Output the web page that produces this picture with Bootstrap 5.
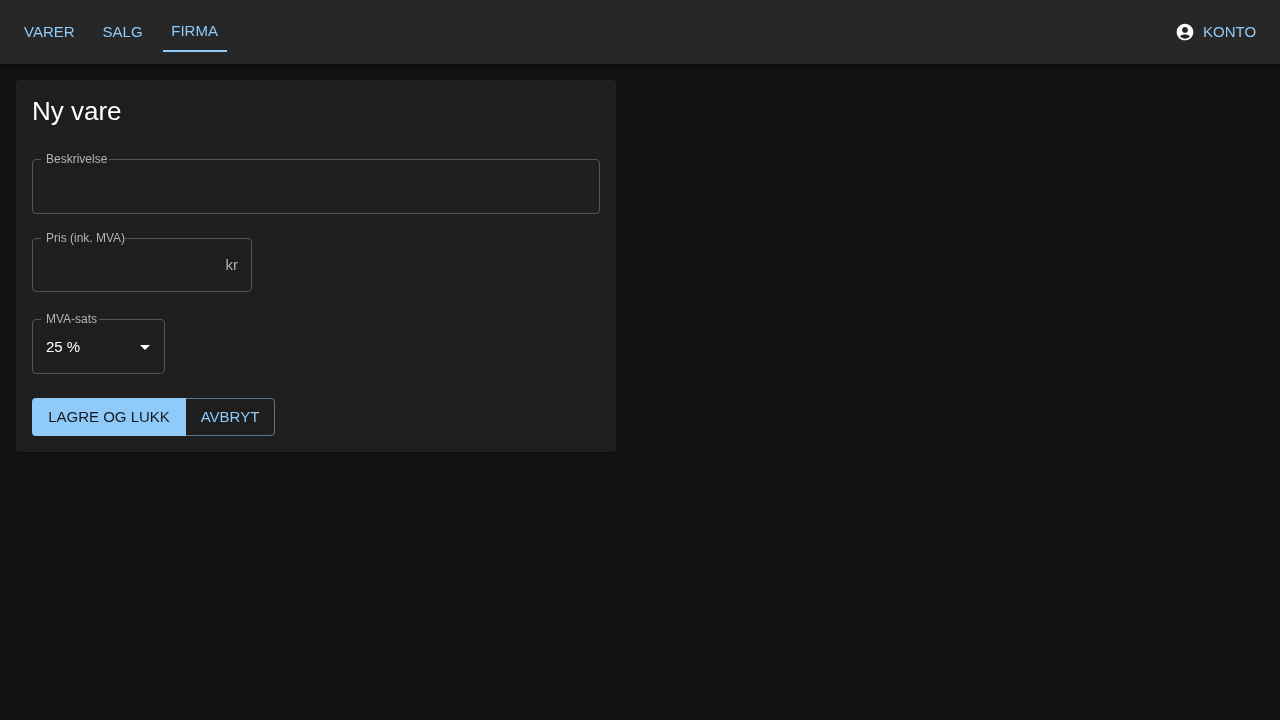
<!DOCTYPE html>
<html lang="no">
<head>
<meta charset="utf-8">
<title>Ny vare</title>
<link href="https://cdn.jsdelivr.net/npm/bootstrap@5.3.0/dist/css/bootstrap.min.css" rel="stylesheet">
<style>
html,body{height:100%}
body{background:#121212;color:#fff;font-family:"Liberation Sans",Arial,sans-serif;font-size:16px;-webkit-font-smoothing:antialiased}
.topbar{height:64px;background:#272727;padding:0 24px;box-shadow:0 2px 4px -1px rgba(0,0,0,.2),0 4px 5px rgba(0,0,0,.14),0 1px 10px rgba(0,0,0,.12)}
.tab-link{color:#90caf9;font-size:15px;line-height:26px;text-decoration:none;text-transform:uppercase}
.tabs-row{gap:28px;will-change:transform}
.acct-link{will-change:transform}
.tab-active{display:block;width:64px;text-align:center;padding:7px 0 0;margin:0 -8px;border-bottom:2px solid #90caf9;height:40px;line-height:24px}
.acct-icon{width:20px;height:20px;fill:#fff}
.sheet{width:600px;margin:16px 0 0 16px;background:#1e1e1e;border-radius:4px;padding:16px;will-change:transform;box-shadow:0 2px 1px -1px rgba(0,0,0,.2),0 1px 1px rgba(0,0,0,.14),0 1px 3px rgba(0,0,0,.12)}
.sheet-title{font-size:26px;line-height:30px;font-weight:400;margin:0 0 33px}
.outfield{position:relative;border:1px solid #555;border-radius:4px;height:55px;color:#fff}
.outfield-label{position:absolute;top:-8px;left:8px;padding:0 2px 0 5px;background:#1e1e1e;color:#b3b3b3;font-size:12px;line-height:14px}
.label-tight{padding-right:0}
.w-desc{width:568px;margin-bottom:24px}
.w-price{width:220px;height:54px;margin-bottom:27px;padding:0 13px}
.unit{color:#b3b3b3;font-size:15px}
.w-vat{width:133px;margin-bottom:24px;padding:2px 13px 0}
.vat-value{font-size:15px}
.caret-down{width:0;height:0;border-left:5px solid transparent;border-right:5px solid transparent;border-top:5px solid #fff;margin-right:1px}
.act-btn{height:38px;font-size:15px;line-height:24px;border-radius:4px;padding:0;display:flex;align-items:center;justify-content:center;text-transform:uppercase;border:1px solid transparent}
.act-primary{position:relative;z-index:1;width:154px;background:#90caf9;color:rgba(0,0,0,.87);border-top-right-radius:0;border-bottom-right-radius:0}
.act-primary:hover,.act-primary:active{background:#90caf9!important;color:rgba(0,0,0,.87)!important;border-color:transparent!important}
.act-second{width:90px;margin-left:-1px;background:transparent;color:#90caf9;border-color:#57748c;border-top-left-radius:0;border-bottom-left-radius:0}
.act-second:hover{color:#90caf9;border-color:#57748c}
</style>
</head>
<body>
<nav class="topbar d-flex align-items-center justify-content-between">
  <div class="d-flex align-items-center tabs-row">
    <a class="tab-link" href="#">Varer</a>
    <a class="tab-link" href="#">Salg</a>
    <a class="tab-link tab-active" href="#">Firma</a>
  </div>
  <a class="tab-link acct-link d-flex align-items-center gap-2" href="#">
    <svg class="acct-icon" viewBox="0 0 24 24" aria-hidden="true"><path d="M12 2C6.48 2 2 6.48 2 12s4.48 10 10 10 10-4.48 10-10S17.52 2 12 2zm0 4c1.93 0 3.5 1.57 3.5 3.5S13.93 13 12 13s-3.5-1.57-3.5-3.5S10.07 6 12 6zm0 14c-2.03 0-4.43-.82-6.14-2.88C7.55 15.8 9.68 15 12 15s4.45.8 6.14 2.12C16.43 19.18 14.03 20 12 20z"/></svg>
    <span>Konto</span>
  </a>
</nav>
<main class="sheet">
  <h1 class="sheet-title">Ny vare</h1>
  <div class="outfield w-desc"><span class="outfield-label">Beskrivelse</span></div>
  <div class="outfield w-price d-flex align-items-center justify-content-end"><span class="outfield-label label-tight">Pris (ink. MVA)</span><span class="unit">kr</span></div>
  <div class="outfield w-vat d-flex align-items-center justify-content-between"><span class="outfield-label">MVA-sats</span><span class="vat-value">25 %</span><span class="caret-down"></span></div>
  <div class="d-flex">
    <button type="button" class="btn act-btn act-primary">Lagre og lukk</button>
    <button type="button" class="btn act-btn act-second">Avbryt</button>
  </div>
</main>
<script src="https://cdn.jsdelivr.net/npm/bootstrap@5.3.0/dist/js/bootstrap.bundle.min.js"></script>
</body>
</html>
